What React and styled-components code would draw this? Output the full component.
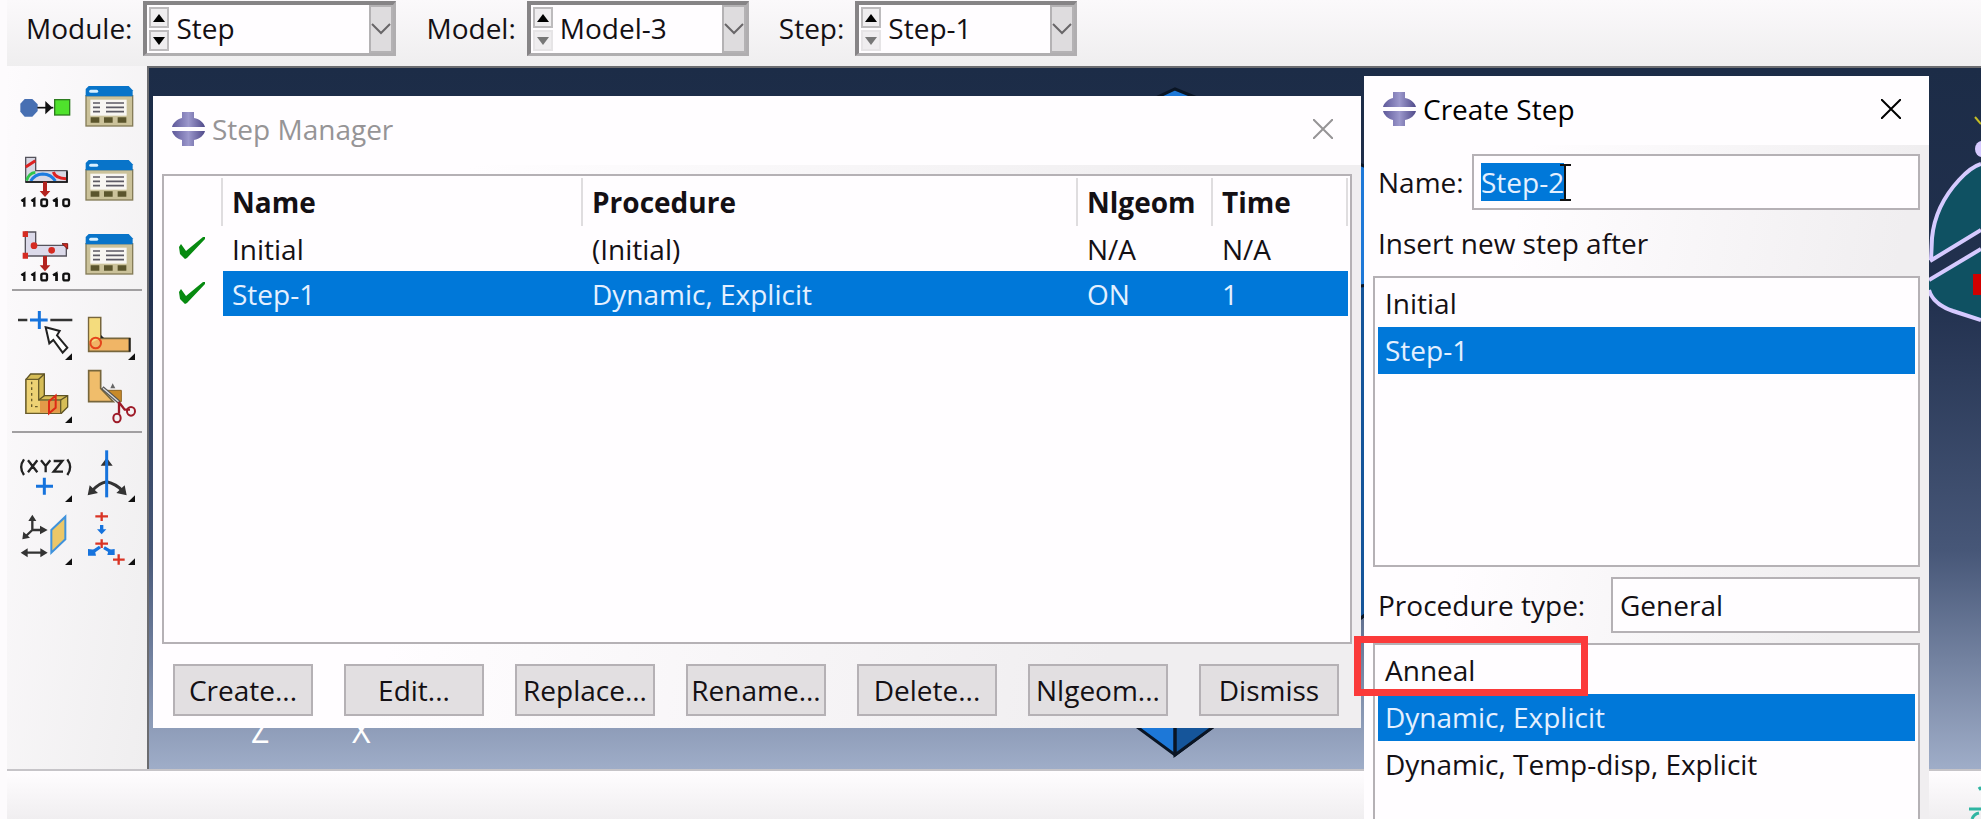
import React, { useEffect, useRef } from "react";
import styled, { createGlobalStyle, css } from "styled-components";

const GlobalStyle = createGlobalStyle`
  * { box-sizing: border-box; }
  html, body { margin: 0; height: 100%; overflow: hidden; }
  body, button, input, select, table {
    font-family: "Open Sans", "Noto Sans", sans-serif;
    font-size: 28px;
    line-height: 36px;
    color: #141014;
  }
  body { background: #fdfbfd; }
`;

const line = "#b5b1b5";
const highlight = "#0078d9";

const Desktop = styled.div`
  position: relative;
  display: flex;
  flex-direction: column;
  height: 100vh;
  padding-left: 7px;
  overflow: hidden;
`;

const Toolbar = styled.header`
  display: flex;
  align-items: center;
  gap: 30px;
  height: 66px;
  padding: 0 19px 9px;
  background: linear-gradient(#fbf9fb, #efeeef);
`;

const Field = styled.div`
  display: flex;
  align-items: center;
  gap: 11px;
`;

const FieldLabel = styled.label`
  padding-bottom: 2px;
`;

const Combo = styled.div`
  display: flex;
  width: ${(p) => p.$width}px;
  height: 55px;
  border: solid;
  border-width: 4px 3px 3px 4px;
  border-color: #868486 #b0aeb0 #b0aeb0 #868486;
  background: #fffdff;
`;

const Spinner = styled.div`
  display: flex;
  flex-direction: column;
  gap: 2px;
  padding: 2px;
`;

const SpinButton = styled.button`
  display: grid;
  place-items: center;
  width: 20px;
  height: 21px;
  padding: 0;
  border: 2px solid ${(p) => (p.disabled ? "#e6e4e6" : "#bdbbbd")};
  background: #efedef;
  color: ${(p) => (p.disabled ? "#777" : "#000")};
`;

const ComboSelect = styled.select`
  flex: 1;
  min-width: 0;
  appearance: none;
  border: 0;
  padding: 0 0 2px 5px;
  background: transparent;
`;

const DropMark = styled.span`
  display: grid;
  place-items: center;
  width: 24px;
  border: 2px solid #b4b2b4;
  background: #dedcde;
`;

const Workspace = styled.main`
  display: flex;
  flex: 1;
  min-height: 0;
`;

const ToolPanel = styled.nav`
  width: 140px;
  padding: 5px 2px 0 5px;
  background: linear-gradient(100deg, #fdfbfd, #efeeef);
`;

const ToolGroup = styled.div`
  display: grid;
  grid-template-columns: 62px 62px;
  gap: ${(p) => (p.$tall ? 4 : 7)}px 4px;
  grid-auto-rows: ${(p) => (p.$tall ? 70 : 56)}px;
  padding: ${(p) => (p.$tall ? "0 0 0 2px" : "14px 0 7px 2px")};
  width: 130px;

  & + & { border-top: 2px solid #a19fa1; }
`;

const ToolButton = styled.button`
  padding: 0;
  border: 0;
  background: none;

  svg { display: block; }
`;

const Viewport = styled.section`
  position: relative;
  flex: 1;
  border: 2px solid #6b6c70;
  border-width: 2px 0 0 2px;
  background: linear-gradient(#1c2c47 0%, #22314f 33%, #475778 69%, #9fadc8 100%);
`;

const Scene = styled.svg`
  position: absolute;
  top: 0;
  left: 0;
  width: 100%;
  height: 100%;
`;

const SideModel = styled.svg`
  position: absolute;
  top: 0;
  right: 0;
`;

const StatusBar = styled.footer`
  display: flex;
  justify-content: flex-end;
  height: 50px;
  border-top: 2px solid #c6c4c8;
  background: linear-gradient(#fffdff, #f0eef0);
`;

const Dialog = styled.section`
  position: absolute;
  display: flex;
  flex-direction: column;
  background: linear-gradient(100deg, #fffdff 25%, #f0eef0 80%);
`;

const ManagerDialog = styled(Dialog)`
  top: 96px;
  left: 153px;
  right: 620px;
  height: 632px;
`;

const CreateDialog = styled(Dialog)`
  top: 76px;
  right: 52px;
  bottom: -80px;
  width: 565px;
`;

const TitleBar = styled.div`
  display: flex;
  align-items: center;
  gap: 7px;
  height: 69px;
  padding: 0 28px 3px 19px;
  background: #fffdff;
  color: ${(p) => (p.$inactive ? "#969496" : "#000")};
`;

const Title = styled.h2`
  flex: 1;
  margin: 0;
  font-size: 28px;
  font-weight: 400;
`;

const CloseButton = styled.button`
  padding: 0;
  border: 0;
  background: none;
  color: inherit;

  svg { display: block; }
`;

const DialogBody = styled.div`
  display: flex;
  flex: 1;
  flex-direction: column;
  min-height: 0;
  padding: 9px;
`;

const TableFrame = styled.div`
  flex: 1;
  padding: 2px 2px 0 0;
  border: 2px solid ${line};
  background: #fffdff;
`;

const StepTable = styled.table`
  width: 100%;
  table-layout: fixed;
  border-spacing: 0;
`;

const HeadCell = styled.th`
  width: ${(p) => (p.$width ? p.$width + "px" : "auto")};
  height: 48px;
  padding: 0 0 0 9px;
  border-right: 2px solid #dfdddf;
  text-align: left;
  font-weight: 700;
`;

const Cell = styled.td`
  height: 45px;
  padding: 0 0 0 9px;
  ${(p) =>
    p.$selected &&
    css`
      background: ${highlight};
      color: #e4f0ff;
    `}
`;

const MarkCell = styled.td`
  padding: 0 0 0 15px;

  svg { display: block; }
`;

const ButtonRow = styled.div`
  display: flex;
  justify-content: space-between;
  padding: 20px 13px 3px 11px;
`;

const PushButton = styled.button`
  width: 140px;
  height: 52px;
  padding: 0;
  border: 2px solid ${line};
  background: #e2dfe1;
  white-space: nowrap;
`;

const FormRow = styled.div`
  display: flex;
  align-items: center;
  height: 56px;
  padding-left: 5px;
`;

const FormLabel = styled.label`
  width: ${(p) => p.$width}px;
  white-space: nowrap;
`;

const boxed = css`
  flex: 1;
  min-width: 0;
  height: 56px;
  padding: 0 7px;
  border: 2px solid ${line};
  border-radius: 0;
  outline: 0;
  background: #fffdff;
`;

const TextInput = styled.input`
  ${boxed}
  &::selection { background: ${highlight}; color: #e4f0ff; }
`;

const TypeSelect = styled.select`
  ${boxed}
  appearance: none;
`;

const NameBox = styled.div`
  position: relative;
  display: flex;
  flex: 1;
`;

const TextCursor = styled.svg`
  position: absolute;
  top: 10px;
  left: 88px;
`;

const ListLabel = styled.div`
  padding: 15px 5px;
`;

const ListBox = styled.ul`
  flex: ${(p) => (p.$height ? "none" : 1)};
  height: ${(p) => (p.$height ? p.$height + "px" : "auto")};
  margin: 0 0 ${(p) => (p.$height ? 10 : 0)}px;
  padding: 2px 3px;
  border: 2px solid ${line};
  background: #fffdff;
  list-style: none;
`;

const ListItem = styled.li`
  height: 47px;
  padding: 5px 7px;
  ${(p) =>
    p["aria-selected"] &&
    css`
      background: ${highlight};
      color: #e4f0ff;
    `}
`;

const TypeRow = styled(FormRow)`
  margin-bottom: 10px;
`;

const Callout = styled.div`
  position: absolute;
  top: 560px;
  left: -10px;
  width: 234px;
  height: 60px;
  border: 7px solid #fb3a3a;
  pointer-events: none;
`;

const Triangle = ({ down }) => (
  <svg width="12" height="8" viewBox="0 0 12 8" aria-hidden="true">
    <path d={down ? "M0 0H12L6 8Z" : "M0 8H12L6 0Z"} fill="currentColor" />
  </svg>
);

const ComboField = ({ id, label, width, value, last }) => (
  <Field>
    <FieldLabel htmlFor={id}>{label}</FieldLabel>
    <Combo $width={width}>
      <Spinner>
        <SpinButton aria-label={`Previous ${id}`}><Triangle /></SpinButton>
        <SpinButton aria-label={`Next ${id}`} disabled={last}><Triangle down /></SpinButton>
      </Spinner>
      <ComboSelect id={id} defaultValue={value}>
        <option>{value}</option>
      </ComboSelect>
      <DropMark>
        <svg width="20" height="12" viewBox="0 0 20 12" fill="none" stroke="#686668" strokeWidth="2" aria-hidden="true">
          <path d="M1 1L10 10L19 1" />
        </svg>
      </DropMark>
    </Combo>
  </Field>
);

const AppMark = () => (
  <svg width="33" height="34" viewBox="0 0 33 34" aria-hidden="true">
    <defs>
      <linearGradient id="mark">
        <stop offset="0" stopColor="#5d5799" />
        <stop offset="0.5" stopColor="#9c98cc" />
        <stop offset="1" stopColor="#4f4989" />
      </linearGradient>
    </defs>
    <path
      d="M10 0H22V6C28 7 32 11 33 15H0C1 11 5 7 10 6ZM0 19H33C32 23 28 27 22 28V34H10V28C5 27 1 23 0 19Z"
      fill="url(#mark)"
    />
  </svg>
);

const CloseIcon = () => (
  <svg width="20" height="20" viewBox="0 0 20 20" stroke="currentColor" strokeWidth="2" aria-hidden="true">
    <path d="M0 0L20 20M20 0L0 20" />
  </svg>
);

const Check = () => (
  <svg width="26" height="23" viewBox="0 0 26 23" aria-hidden="true">
    <path d="M0 10L2 7L7 14L24 0H26V2L8 21L6 22L1 17Z" fill="#078a10" />
  </svg>
);

/* Tool drawings share one canvas per group, at three units to the pixel. */
const Tool = ({ label, x, y, h = 56, children }) => (
  <ToolButton aria-label={label}>
    <svg width="62" height={h} viewBox={`${x} ${y} 186 ${h * 3}`} fill="none" aria-hidden="true">
      {children}
    </svg>
  </ToolButton>
);

const More = ({ x, y }) => <path d={`M${x} ${y}V${y - 20}L${x - 21} ${y}Z`} fill="#111" />;

const ManagerTool = ({ label, y }) => (
  <Tool label={label} x={240} y={y} h={70}>
    <g transform={`translate(0 ${y - 18})`}>
      <rect x="258" y="92" width="140" height="91" fill="#cbc29a" stroke="#857c58" strokeWidth="4" />
      <path d="M257 94V72L266 63H386L398 76V94Z" fill="#0874c9" />
      <path d="M272 79H290" stroke="#d8f0ff" strokeWidth="9" strokeLinecap="round" />
      <rect x="271" y="104" width="109" height="48" fill="#f8f6f2" />
      <path d="M279 114H300M279 127H300M279 140H300M318 114H372M318 127H372M318 140H372" stroke="#5c5a64" strokeWidth="5" />
      <path d="M272 165H298M312 165H338M353 165H379" stroke="#5b552c" strokeWidth="16" />
    </g>
  </Tool>
);

const BinaryOutput = ({ y }) => (
  <g transform={`translate(0 ${y})`}>
    <path d="M135 350V382" stroke="#b3231f" strokeWidth="12" />
    <path d="M119 378H151L135 396Z" fill="#b3231f" />
    <path d="M64 408L73 402V425M94 408L103 402V425M159 408L169 402V425" stroke="#111" strokeWidth="7" />
    <rect x="124" y="403" width="17" height="20" rx="5" stroke="#111" strokeWidth="7" />
    <rect x="190" y="403" width="17" height="20" rx="5" stroke="#111" strokeWidth="7" />
    <path d="M171 402V425" stroke="#111" strokeWidth="5" />
  </g>
);

const CreateStepTool = () => (
  <Tool label="Create Step" x={42} y={18} h={70}>
    <path d="M74 102H97L113 118V138L97 155H74L61 140V116Z" fill="#476fb2" />
    <path d="M112 128H160" stroke="#111" strokeWidth="5" />
    <path d="M136 108L157 128L136 148Z" fill="#111" />
    <rect x="164" y="104" width="45" height="46" fill="#4fe22c" stroke="#2d7c1f" strokeWidth="4" />
  </Tool>
);

const FieldOutputTool = () => (
  <Tool label="Create Field Output" x={42} y={240} h={70}>
    <path d="M77 277H107V317H201V351H77Z" fill="#d8d8e4" stroke="#55535c" strokeWidth="4" />
    <path d="M77 306L106 287" stroke="#d22" strokeWidth="9" />
    <path d="M80 347Q86 324 106 322" stroke="#2fc54b" strokeWidth="8" />
    <path d="M92 348Q104 328 128 327Q154 328 166 348" stroke="#1c7be0" strokeWidth="9" />
    <path d="M160 321Q166 340 198 341" stroke="#d22" strokeWidth="9" />
    <path d="M77 351H201V319" stroke="#111" strokeWidth="5" />
    <BinaryOutput y={0} />
  </Tool>
);

const HistoryOutputTool = () => (
  <Tool label="Create History Output" x={42} y={462} h={70}>
    <path d="M76 501H107V541H199V573H76Z" fill="#dcdaea" stroke="#55535c" strokeWidth="4" />
    <path d="M76 499V516M68 507H84M76 563V581M68 572H84" stroke="#d52b22" strokeWidth="16" />
    <circle cx="102" cy="542" r="10" fill="#d52b22" />
    <circle cx="155" cy="556" r="10" fill="#d52b22" />
    <path d="M186 536H203V552Z" fill="#d52b22" stroke="#7c1714" strokeWidth="3" />
    <BinaryOutput y={223} />
  </Tool>
);

const PartitionEdgeTool = () => (
  <Tool label="Partition Edge" x={42} y={60}>
    <path d="M54 105H82M151 105H217" stroke="#333" strokeWidth="8" />
    <path d="M90 105H143M118 78V132" stroke="#1673dd" strokeWidth="9" />
    <path d="M137 127L179 138L171 151L202 188L188 203L160 165L148 175Z" fill="#fff" stroke="#222" strokeWidth="6" />
    <More x={216} y={225} />
  </Tool>
);

const PartitionFaceTool = () => (
  <Tool label="Partition Face" x={240} y={60}>
    <path d="M266 98H302V160H389V199H266Z" fill="#f0b566" stroke="#77663c" strokeWidth="5" />
    <path d="M268 100H300V160L268 176Z" fill="#f4dc7d" />
    <path d="M389 159V200" stroke="#222" strokeWidth="6" />
    <circle cx="287" cy="174" r="16" stroke="#e4461c" strokeWidth="6" />
    <path d="M303 150L312 159H303Z" fill="#222" />
    <More x={405} y={225} />
  </Tool>
);

const PartitionCellTool = () => (
  <Tool label="Partition Cell" x={42} y={249}>
    <path d="M78 283L92 267H133V332H203V366L184 385H78Z" fill="#d6bd57" stroke="#5f5426" strokeWidth="4" />
    <path d="M78 283H116V345H182V385H78Z" fill="#edd274" stroke="#6a5d2a" strokeWidth="4" />
    <path d="M116 283L133 267M116 345L133 332M182 345L203 332" stroke="#5f5426" strokeWidth="4" />
    <path d="M95 290V370M105 365H145" stroke="#6a5d2a" strokeWidth="4" strokeDasharray="8 9" />
    <path d="M120 348H180V383H120Z" fill="#e39a48" />
    <path d="M147 349L167 332V368L147 385Z" stroke="#dd2a16" strokeWidth="6" />
    <More x={216} y={414} />
  </Tool>
);

const TrimTool = () => (
  <Tool label="Edit Partition" x={240} y={249}>
    <path d="M266 257H302V310L340 350H266Z" fill="#f0bd6b" stroke="#77663c" strokeWidth="5" />
    <path d="M318 316H364V350H350Z" fill="#c88a2a" stroke="#8c6426" strokeWidth="3" />
    <path d="M331 310L338 295L346 310Z" fill="#666" />
    <path d="M307 308L358 352" stroke="#555" strokeWidth="11" />
    <path d="M309 310L356 350" stroke="#ddd" strokeWidth="4" />
    <path d="M357 350V386M357 352L374 374L390 374" stroke="#9e1b28" strokeWidth="7" />
    <ellipse cx="351" cy="399" rx="11" ry="13" stroke="#9e1b28" strokeWidth="6" />
    <ellipse cx="393" cy="379" rx="12" ry="13" stroke="#9e1b28" strokeWidth="6" />
  </Tool>
);

const PointTool = () => (
  <Tool label="Create Datum Point" x={42} y={486}>
    <path
      d="M72 523Q55 546 72 570M202 523Q219 546 202 570M84 526L112 562M112 526L84 562M123 526L137 543L151 526M137 543V562M161 528H187L161 560H189"
      stroke="#222"
      strokeWidth="7"
    />
    <path d="M108 604H159M133 578V629" stroke="#1673dd" strokeWidth="9" />
    <More x={216} y={651} />
  </Tool>
);

const AxisTool = () => (
  <Tool label="Create Datum Axis" x={240} y={486}>
    <path d="M320 590Q296 594 276 618M320 590Q348 596 368 618" stroke="#333" strokeWidth="9" />
    <path d="M263 631L269 601L294 624ZM380 631L374 601L349 624ZM302 542H338L320 518Z" fill="#333" />
    <path d="M320 496V637" stroke="#1673dd" strokeWidth="9" />
    <More x={405} y={651} />
  </Tool>
);

const PlaneTool = () => (
  <Tool label="Create Datum Plane" x={42} y={675}>
    <path d="M97 700V735H130M97 735L78 753M76 803H128" stroke="#333" strokeWidth="7" />
    <path d="M85 708L97 689L109 708ZM120 722L143 735L120 748ZM67 763L70 740L90 758ZM83 790L62 803L83 817ZM121 790L143 803L121 817Z" fill="#333" />
    <path d="M154 735L196 695V763L154 803Z" fill="#ecc768" stroke="#3f92dc" strokeWidth="6" />
    <More x={216} y={840} />
  </Tool>
);

const CsysTool = () => (
  <Tool label="Create Datum Coordinate System" x={240} y={675}>
    <path d="M286 694H324M305 682V708M286 776H324M305 763V789M339 824H374M356 808V839" stroke="#d93425" strokeWidth="7" />
    <path d="M305 720V738M300 786L280 800M312 788L336 802" stroke="#1673dd" strokeWidth="10" />
    <path d="M291 733H319L305 748ZM264 792L284 794L288 812H264ZM344 792L326 794L322 810H344Z" fill="#1673dd" />
    <More x={405} y={840} />
  </Tool>
);

const steps = [
  { name: "Initial", procedure: "(Initial)", nlgeom: "N/A", time: "N/A" },
  { name: "Step-1", procedure: "Dynamic, Explicit", nlgeom: "ON", time: "1", selected: true },
];

const actions = ["Create...", "Edit...", "Replace...", "Rename...", "Delete...", "Nlgeom...", "Dismiss"];

const StepManager = () => (
  <ManagerDialog role="dialog" aria-label="Step Manager">
    <TitleBar $inactive>
      <AppMark />
      <Title>Step Manager</Title>
      <CloseButton aria-label="Close"><CloseIcon /></CloseButton>
    </TitleBar>
    <DialogBody>
      <TableFrame>
        <StepTable>
          <thead>
            <tr>
              <HeadCell $width={59} aria-label="Valid" />
              <HeadCell $width={360}>Name</HeadCell>
              <HeadCell>Procedure</HeadCell>
              <HeadCell $width={135}>Nlgeom</HeadCell>
              <HeadCell $width={135}>Time</HeadCell>
            </tr>
          </thead>
          <tbody>
            {steps.map((s) => (
              <tr key={s.name}>
                <MarkCell><Check /></MarkCell>
                <Cell $selected={s.selected}>{s.name}</Cell>
                <Cell $selected={s.selected}>{s.procedure}</Cell>
                <Cell $selected={s.selected}>{s.nlgeom}</Cell>
                <Cell $selected={s.selected}>{s.time}</Cell>
              </tr>
            ))}
          </tbody>
        </StepTable>
      </TableFrame>
      <ButtonRow>
        {actions.map((a) => <PushButton key={a}>{a}</PushButton>)}
      </ButtonRow>
    </DialogBody>
  </ManagerDialog>
);

const CreateStep = () => {
  const nameRef = useRef(null);
  useEffect(() => {
    nameRef.current.focus();
    nameRef.current.select();
  }, []);

  return (
    <CreateDialog role="dialog" aria-label="Create Step">
      <TitleBar>
        <AppMark />
        <Title>Create Step</Title>
        <CloseButton aria-label="Close"><CloseIcon /></CloseButton>
      </TitleBar>
      <DialogBody>
        <FormRow>
          <FormLabel htmlFor="step-name" $width={94}>Name:</FormLabel>
          <NameBox>
            <TextInput id="step-name" ref={nameRef} defaultValue="Step-2" />
            <TextCursor width="11" height="37" viewBox="0 0 11 37" stroke="#111" strokeWidth="2" fill="none" aria-hidden="true">
              <path d="M0 1H11M0 36H11M5 1V36" />
            </TextCursor>
          </NameBox>
        </FormRow>
        <ListLabel id="after-label">Insert new step after</ListLabel>
        <ListBox role="listbox" aria-labelledby="after-label" $height={291}>
          <ListItem role="option" aria-selected={false}>Initial</ListItem>
          <ListItem role="option" aria-selected>Step-1</ListItem>
        </ListBox>
        <TypeRow>
          <FormLabel htmlFor="procedure-type" $width={233}>Procedure type:</FormLabel>
          <TypeSelect id="procedure-type" defaultValue="General">
            <option>General</option>
          </TypeSelect>
        </TypeRow>
        <ListBox role="listbox" aria-label="Procedure">
          <ListItem role="option" aria-selected={false}>Anneal</ListItem>
          <ListItem role="option" aria-selected>Dynamic, Explicit</ListItem>
          <ListItem role="option" aria-selected={false}>Dynamic, Temp-disp, Explicit</ListItem>
        </ListBox>
      </DialogBody>
      <Callout />
    </CreateDialog>
  );
};

export default function App() {
  return (
    <>
      <GlobalStyle />
      <Desktop>
        <Toolbar>
          <ComboField id="module" label="Module:" width={253} value="Step" />
          <ComboField id="model" label="Model:" width={222} value="Model-3" last />
          <ComboField id="step" label="Step:" width={222} value="Step-1" last />
        </Toolbar>
        <Workspace>
          <ToolPanel aria-label="Toolbox">
            <ToolGroup $tall>
              <CreateStepTool />
              <ManagerTool label="Step Manager" y={18} />
              <FieldOutputTool />
              <ManagerTool label="Field Output Manager" y={240} />
              <HistoryOutputTool />
              <ManagerTool label="History Output Manager" y={462} />
            </ToolGroup>
            <ToolGroup>
              <PartitionEdgeTool />
              <PartitionFaceTool />
              <PartitionCellTool />
              <TrimTool />
            </ToolGroup>
            <ToolGroup>
              <PointTool />
              <AxisTool />
              <PlaneTool />
              <CsysTool />
            </ToolGroup>
          </ToolPanel>
          <Viewport>
            <Scene aria-hidden="true">
              <g stroke="#0a1524" strokeWidth="3">
                <path d="M1026 21L1220 100V544L1026 687L900 594V80Z" fill="#1d78d8" />
                <path d="M1026 240L1220 217V544L1026 687Z" fill="#15559a" />
                <path d="M1026 400V687" />
              </g>
              <text x="102" y="675" fontSize="32" fill="#fff">Z</text>
              <text x="203" y="675" fontSize="32" fill="#fff">X</text>
            </Scene>
            <SideModel width="52" height="260" viewBox="0 0 52 260" fill="none" aria-hidden="true">
              <path d="M2 192V182Q4 140 26 117Q40 100 52 96V160Z" fill="#0f5162" />
              <path d="M0 212L52 182V251L30 246Q6 238 0 222Z" fill="#0f5162" />
              <path d="M52 96Q42 99 30 112Q6 138 3 170L2 192M1 193L52 162M0 212L52 181M0 222Q4 236 24 243L52 252" stroke="#d6caff" strokeWidth="4" />
              <ellipse cx="53" cy="81" rx="7" ry="8" fill="#d6caff" />
              <path d="M46 49L52 56" stroke="#c4bd25" strokeWidth="2" />
              <rect x="44" y="206" width="8" height="21" fill="#cf0000" />
            </SideModel>
          </Viewport>
        </Workspace>
        <StatusBar>
          <svg width="14" height="48" viewBox="0 0 14 48" fill="none" stroke="#2fb5a2" strokeWidth="3" aria-hidden="true">
            <path d="M2 38H14M12 16L14 19M5 48Q7 43 12 42" />
          </svg>
        </StatusBar>
        <StepManager />
        <CreateStep />
      </Desktop>
    </>
  );
}
